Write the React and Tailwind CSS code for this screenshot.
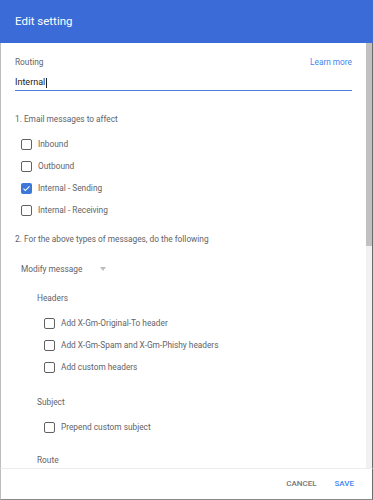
import React from "react";

const font = { fontFamily: "Roboto, 'Noto Sans', Arial, sans-serif" };

const Box = ({ checked }) =>
  checked ? (
    <span className="flex h-[11px] w-[11px] items-center justify-center rounded-[2px] bg-[#3c78d8]">
      <svg width="9" height="9" viewBox="0 0 24 24">
        <path d="M4 12.5l5 5L20 6.5" fill="none" stroke="#fff" strokeWidth="3" />
      </svg>
    </span>
  ) : (
    <span className="h-[11px] w-[11px] rounded-[2px] border-[1.5px] border-[#616161] bg-white" />
  );

const Check = ({ label, checked, indent }) => (
  <div className={"flex h-[22px] items-center " + (indent ? "pl-[29px]" : "pl-[6px]")}>
    <Box checked={checked} />
    <span className="ml-[6px] text-[8.3px] text-[#5f6368]">{label}</span>
  </div>
);

const App = () => {
  let affect = [
    { label: "Inbound" },
    { label: "Outbound" },
    { label: "Internal - Sending", checked: true },
    { label: "Internal - Receiving" },
  ];
  let headers = [
    "Add X-Gm-Original-To header",
    "Add X-Gm-Spam and X-Gm-Phishy headers",
    "Add custom headers",
  ];
  return (
    <div className="flex h-[500px] w-[373px] flex-col overflow-hidden bg-white" style={font}>
      <div className="flex h-[43px] shrink-0 items-center bg-[#3b6bd6] pl-[15px]">
        <h2 className="text-[11.5px] text-white">Edit setting</h2>
      </div>
      <div className="flex min-h-0 flex-1 border-l border-r border-l-[#bdbdbd] border-r-[#6b6b6b]">
        <div className="flex-1 overflow-hidden pl-[14px] pr-[14px] pt-[12px]">
          <div className="flex h-[14px] items-center justify-between text-[8.3px]">
            <span className="text-[#5f6368]">Routing</span>
            <span className="text-[#4285f4]">Learn more</span>
          </div>
          <div className="mt-[6px] flex h-[16px] items-center border-b border-b-[#4a7fe0] text-[9px] text-[#202124]">
            Internal
            <span className="ml-[1px] h-[10px] w-[1px] bg-[#202124]" />
          </div>
          <div className="mt-[21px] flex h-[14px] items-center text-[8.3px] text-[#5f6368]">
            1. Email messages to affect
          </div>
          <div className="mt-[7px]">
            {affect.map((item) => (
              <Check key={item.label} label={item.label} checked={item.checked} />
            ))}
          </div>
          <div className="mt-[11px] flex h-[14px] items-center text-[8.3px] text-[#5f6368]">
            2. For the above types of messages, do the following
          </div>
          <div className="mt-[15px] flex h-[16px] items-center pl-[6px] text-[8.3px] text-[#5f6368]">
            Modify message
            <span className="ml-[18px] h-0 w-0 border-l-[3.5px] border-r-[3.5px] border-t-[4px] border-l-transparent border-r-transparent border-t-[#bdbdbd]" />
          </div>
          <div className="mt-[14px] flex h-[14px] items-center pl-[22px] text-[8.3px] text-[#5f6368]">
            Headers
          </div>
          <div className="mt-[7px]">
            {headers.map((h) => (
              <Check key={h} label={h} indent />
            ))}
          </div>
          <div className="mt-[17px] flex h-[14px] items-center pl-[22px] text-[8.3px] text-[#5f6368]">
            Subject
          </div>
          <div className="mt-[7px]">
            <Check label="Prepend custom subject" indent />
          </div>
          <div className="mt-[15px] flex h-[14px] items-center pl-[22px] text-[8.3px] text-[#5f6368]">
            Route
          </div>
        </div>
        <div className="flex w-[6px] shrink-0 flex-col bg-[#f1f1f1]">
          <div className="h-[203px] bg-[#c1c1c1]" />
        </div>
      </div>
      <div className="flex h-[32px] shrink-0 items-center justify-end gap-[18px] border border-t-[#ececec] border-l-[#bdbdbd] border-r-[#6b6b6b] border-b-[#8a8a8a] pr-[18px] text-[8px] font-medium">
        <button className="text-[#757575]">CANCEL</button>
        <button className="text-[#4285f4]">SAVE</button>
      </div>
    </div>
  );
};

export default App;
